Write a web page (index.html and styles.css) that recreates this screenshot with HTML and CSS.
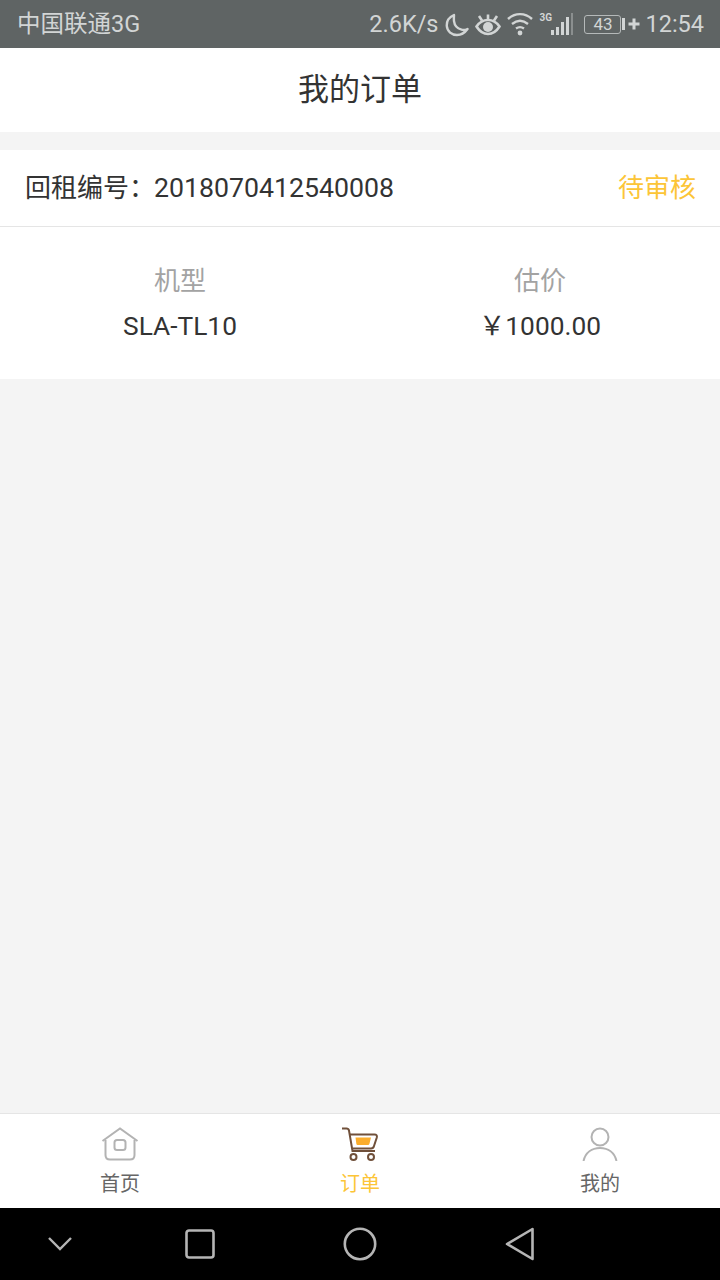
FILE: index.html
```html
<!DOCTYPE html>
<html lang="zh-CN">
<head>
    <meta charset="UTF-8">
    <meta name="viewport" content="width=device-width, initial-scale=1.0">
    <title>我的订单</title>
    <link rel="stylesheet" href="styles.css">
</head>
<body>
    <!-- Status bar -->
    <div class="status-bar">
        <span class="carrier">中国联通3G</span>
        <div class="status-right">
            <span class="speed">2.6K/s</span>
            <svg class="st-moon" width="24" height="26" viewBox="0 -2 24 26"><path d="M9 2C4.500 4 1.500 8 1.800 13c.4 5.500 5 9 10.200 9 4 0 8-2.500 10.500-6-2 .9-4 1.200-6 .7-4-1-7-4.500-7.500-8.500-.3-2.500 0-4.500 0-6.200z" fill="none" stroke="#d2d5d5" stroke-width="2.400" stroke-linejoin="round"/></svg>
            <svg class="st-eye" width="26" height="24" viewBox="0 -1 26 24"><path d="M1.500 13.500C5 8.500 9 7 13 7s8 1.500 11.500 6.500C21 19 17 21 13 21S5 19 1.500 13.500z" fill="none" stroke="#d2d5d5" stroke-width="2.600"/><circle cx="13" cy="14" r="5" fill="#d2d5d5"/><path d="M4 3l3 4.500M13 1.500V6M22 3l-3 4.500" stroke="#d2d5d5" stroke-width="2.600" fill="none"/></svg>
            <svg class="st-wifi" width="26" height="24" viewBox="0 0 26 24"><path d="M1 7C8 .5 18 .5 25 7M5 12c5-4 11-4 16 0M9 16.500c2.500-1.700 5.500-1.700 8 0" fill="none" stroke="#d2d5d5" stroke-width="2.400"/><circle cx="13" cy="21" r="2.400" fill="#d2d5d5"/></svg>
            <div class="st-signal">
                <span class="net-type">3G</span>
                <svg width="22" height="24" viewBox="0 0 22 24"><path d="M0 18h3v5H0zM5 15h3v8H5zM10 10h3v13h-3zM15 5h3v18h-3z" fill="#d2d5d5"/><path d="M20 1h2v22h-2z" fill="#8b8f8f"/></svg>
            </div>
            <div class="battery">
                <span class="battery-body">43</span>
                <span class="battery-cap"></span>
            </div>
            <svg class="st-plus" width="12" height="12" viewBox="0 0 12 12"><path d="M6 .5v11M.5 6h11" stroke="#d2d5d5" stroke-width="3"/></svg>
            <span class="clock">12:54</span>
        </div>
    </div>

    <header class="title-bar">我的订单</header>

    <main class="content">
        <section class="order-card">
            <div class="order-head">
                <span class="order-no">回租编号：<span class="order-num">2018070412540008</span></span>
                <span class="order-status">待审核</span>
            </div>
            <div class="order-body">
                <div class="order-col">
                    <div class="col-label">机型</div>
                    <div class="col-value">SLA-TL10</div>
                </div>
                <div class="order-col">
                    <div class="col-label">估价</div>
                    <div class="col-value">￥1000.00</div>
                </div>
            </div>
        </section>
    </main>

    <!-- Tab bar -->
    <nav class="tab-bar">
        <div class="tab">
            <svg width="38" height="34" viewBox="0 0 38 34"><path d="M1.500 14L19 1.500 36.500 14" fill="none" stroke="#b3b3b3" stroke-width="2"/><path d="M4.500 13v15c0 3 1.500 4.500 4.500 4.500h20c3 0 4.500-1.500 4.500-4.500V13" fill="none" stroke="#b3b3b3" stroke-width="2"/><rect x="13.500" y="13" width="11" height="10" rx="2.500" fill="none" stroke="#b3b3b3" stroke-width="2"/></svg>
            <span class="tab-text">首页</span>
        </div>
        <div class="tab tab-active">
            <svg width="38" height="34" viewBox="0 0 38 34"><path d="M1 1.500h4.500c1.500 0 2.200.8 2.500 2L11.500 24H34" fill="none" stroke="#70503a" stroke-width="2"/><path d="M8.500 7.500h25c2 0 2.800 1 2.300 3L33 19c-.4 1.600-1.500 2.500-3 2.500H12" fill="none" stroke="#70503a" stroke-width="2"/><path d="M14.500 10.500H30l-1.500 6c-.2 1-1 1.500-2 1.500H17c-1 0-1.500-.5-1.700-1.500z" fill="#fbad2c"/><circle cx="12.500" cy="30" r="3" fill="none" stroke="#70503a" stroke-width="2"/><circle cx="30" cy="30" r="3" fill="none" stroke="#70503a" stroke-width="2"/></svg>
            <span class="tab-text">订单</span>
        </div>
        <div class="tab">
            <svg width="38" height="34" viewBox="0 0 38 34"><circle cx="19" cy="10" r="8.500" fill="none" stroke="#b3b3b3" stroke-width="2"/><path d="M2.500 34c2-8.500 8.500-13 16.500-13s14.500 4.500 16.500 13" fill="none" stroke="#b3b3b3" stroke-width="2"/></svg>
            <span class="tab-text">我的</span>
        </div>
    </nav>

    <!-- Android nav buttons -->
    <div class="nav-bar">
        <svg width="26" height="16" viewBox="0 0 26 16"><path d="M2 2l11 11L24 2" fill="none" stroke="#b5b5b5" stroke-width="2.400"/></svg>
        <svg width="30" height="30" viewBox="0 0 30 30"><rect x="1.500" y="1.500" width="27" height="27" rx="2.500" fill="none" stroke="#b5b5b5" stroke-width="2.600"/></svg>
        <svg width="34" height="34" viewBox="0 0 34 34"><circle cx="17" cy="17" r="15.200" fill="none" stroke="#b5b5b5" stroke-width="2.600"/></svg>
        <svg width="30" height="34" viewBox="0 0 30 34"><path d="M27.500 2L2 17l25.500 15z" fill="none" stroke="#b5b5b5" stroke-width="2.600" stroke-linejoin="round"/></svg>
    </div>
</body>
</html>
```

FILE: styles.css
```css
* {
    box-sizing: border-box;
}
body {
    margin: 0;
    height: 1280px;
    display: flex;
    flex-direction: column;
    font-family: Roboto, "Noto Sans CJK SC", sans-serif;
    color: #333;
    background-color: #f4f4f4;
}
.status-bar {
    height: 48px;
    padding: 0 16px 0 17px;
    display: flex;
    align-items: center;
    justify-content: space-between;
    background-color: #5f6464;
    color: #d2d5d5;
    font-size: 24px;
}
.carrier {
    padding-bottom: 4px;
    font-size: 23.500px;
}
.status-right {
    display: flex;
    align-items: center;
}
.speed {
    font-size: 23.500px;
}
.st-moon {
    margin-left: 7px;
}
.st-eye {
    margin-left: 6px;
}
.st-wifi {
    margin-left: 6px;
}
.st-signal {
    position: relative;
    width: 34px;
    height: 24px;
    margin-left: 6px;
}
.st-signal svg {
    position: absolute;
    right: 0;
    top: 0;
}
.net-type {
    position: absolute;
    left: 0;
    top: 0;
    font-size: 10px;
    font-weight: 700;
    line-height: 12px;
}
.battery {
    display: flex;
    align-items: center;
    margin-left: 11px;
}
.battery-body {
    width: 37px;
    height: 19px;
    border: 1.500px solid #b5b9b9;
    border-radius: 3px;
    font-size: 17px;
    line-height: 16px;
    text-align: center;
}
.battery-cap {
    width: 3px;
    height: 12px;
    margin-left: 1px;
    background-color: #d2d5d5;
}
.st-plus {
    margin-left: 3px;
}
.clock {
    margin-left: 5px;
    font-size: 23.500px;
}
.title-bar {
    height: 84px;
    line-height: 84px;
    text-align: center;
    font-size: 31px;
    background-color: #fff;
}
.content {
    flex: 1;
    padding-top: 18px;
}
.order-card {
    background-color: #fff;
}
.order-head {
    height: 77px;
    padding: 0 24px 6px 25px;
    display: flex;
    align-items: center;
    justify-content: space-between;
    border-bottom: 1px solid #e5e5e5;
    font-size: 26px;
}
.order-num {
    margin-left: -1px;
    font-size: 26.700px;
}
.order-status {
    color: #fcc537;
}
.order-body {
    height: 152px;
    padding-top: 33px;
    display: flex;
}
.order-col {
    flex: 1;
    text-align: center;
    font-size: 26px;
}
.col-label {
    height: 46px;
    line-height: 42px;
    color: #a3a3a3;
}
.col-value {
    line-height: 40px;
    font-size: 26.300px;
}
.tab-bar {
    height: 95px;
    display: flex;
    border-top: 1px solid #e5e5e5;
    background-color: #fff;
}
.tab {
    flex: 1;
    padding-top: 13px;
    display: flex;
    flex-direction: column;
    align-items: center;
}
.tab-text {
    margin-top: 8px;
    font-size: 20px;
    line-height: 30px;
    color: #666;
}
.tab-active .tab-text {
    color: #fcc537;
}
.nav-bar {
    height: 72px;
    display: grid;
    grid-template-columns: 120px 160px 160px 160px;
    justify-items: center;
    align-items: center;
    background-color: #000;
}
```
